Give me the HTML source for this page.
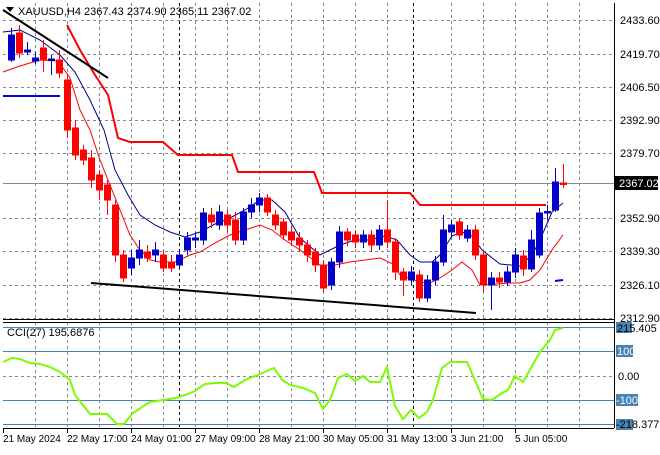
<!DOCTYPE html><html><head><style>
body{margin:0;background:#fff;width:660px;height:450px;overflow:hidden;font-family:"Liberation Sans",sans-serif}
svg text{font-family:"Liberation Sans",sans-serif;font-size:11px;fill:#000}
svg g.b text{font-size:10px}
</style></head><body>
<svg width="660" height="450" xmlns="http://www.w3.org/2000/svg">
<rect width="660" height="450" fill="#fff"/>
<g stroke="#7f8a96" stroke-dasharray="3,3" stroke-width="1" fill="none">
<path d="M3,20.5H614M3,54.5H614M3,87.5H614M3,120.5H614M3,153.5H614M3,218.5H614M3,251.5H614M3,285.5H614M3,318.5H614"/>
<path d="M3,376.5H614"/>
<path d="M35.5,3V318M67.5,3V318M99.5,3V318M131.5,3V318M163.5,3V318M195.5,3V318M227.5,3V318M259.5,3V318M291.5,3V318M323.5,3V318M355.5,3V318M387.5,3V318M451.5,3V318M483.5,3V318M515.5,3V318M547.5,3V318M579.5,3V318"/>
<path d="M35.5,322V428M67.5,322V428M99.5,322V428M131.5,322V428M163.5,322V428M195.5,322V428M227.5,322V428M259.5,322V428M291.5,322V428M323.5,322V428M355.5,322V428M387.5,322V428M451.5,322V428M483.5,322V428M515.5,322V428M547.5,322V428M579.5,322V428"/>
</g>
<g stroke="#000" stroke-dasharray="3,3"><path d="M179.5,3V318M413.5,3V318M179.5,322V428M413.5,322V428"/></g>
<g stroke="#4682b4"><path d="M3,327.5H614M3,351.5H614M3,400.5H614M3,424.5H614"/></g>
<path d="M3,183.5H614" stroke="#7f8a96"/>
<g stroke="#000" fill="none"><path d="M614.5,3V428M3,319.5H614M3,322.5H614M3,428.5H614"/></g>
<g stroke="#000"><path d="M3.5,428V433M67.5,428V433M131.5,428V433M195.5,428V433M259.5,428V433M323.5,428V433M387.5,428V433M451.5,428V433M515.5,428V433"/></g>
<polyline fill="none" stroke="#f00" stroke-width="2" points="67,25 80,50 95,75 108,95 118,138 130,142 163,142 178,155 232,155 238,172 314,172 322,193 410,193 420,205 546,205"/>
<polyline fill="none" stroke="#00008b" stroke-width="1" points="3,32 20,30 40,40 60,55 75,72 90,100 104,130 115,170 128,195 140,215 155,225 170,232 185,237 200,232 215,224 230,218 245,210 260,200 272,200 285,212 300,238 320,255 340,245 355,240 370,240 385,236 397,240 410,255 420,262 432,262 440,255 452,236 462,232 472,236 482,250 500,264 520,266 532,255 540,240 552,212 563,203"/>
<polyline fill="none" stroke="#f00" stroke-width="1" points="3,72 20,66 40,60 58,61 70,78 80,110 90,130 100,160 110,185 120,210 130,235 140,250 150,260 160,262 175,262 190,255 200,252 215,243 230,235 245,230 260,225 272,230 285,240 300,250 320,265 335,265 350,262 365,260 380,258 393,264 400,275 420,282 430,283 440,278 452,270 462,262 472,270 480,285 495,284 510,283 520,283 530,280 540,270 552,250 563,235"/>
<path d="M3,10L108,78M91,283L476,313" stroke="#000" stroke-width="2"/>
<path d="M3,96H60M555,281L563,280" stroke="#00f" stroke-width="2"/>
<g stroke="#0000c8" fill="#0000c8">
<path d="M11.5,28V62M27.5,42V55M35.5,52V64M51.5,55V75M131.5,250V275M139.5,240V265M155.5,242V262M179.5,250V270M187.5,232V255M195.5,232V248M203.5,208V245M219.5,205V230M243.5,208V245M251.5,198V218M259.5,193V212M331.5,258V290M339.5,226V268M363.5,230V248M379.5,225V250M411.5,266V285M427.5,275V302M435.5,256V285M443.5,215V266M451.5,220V238M467.5,225V242M491.5,272V310M507.5,266V286M515.5,248V278M531.5,230V272M539.5,208V258M547.5,205V220M555.5,168V212"/>
<rect x="8.5" y="35" width="6" height="25"/><rect x="24.5" y="50" width="6" height="2"/><rect x="32.5" y="58" width="6" height="3"/><rect x="48.5" y="59" width="6" height="1.5"/>
<rect x="128.5" y="258" width="6" height="10"/><rect x="136.5" y="250" width="6" height="8"/><rect x="152.5" y="250" width="6" height="5"/><rect x="176.5" y="255" width="6" height="10"/><rect x="184.5" y="238" width="6" height="12"/><rect x="192.5" y="238" width="6" height="2"/><rect x="200.5" y="213" width="6" height="27"/><rect x="216.5" y="212" width="6" height="13"/><rect x="240.5" y="212" width="6" height="28"/><rect x="248.5" y="205" width="6" height="7"/><rect x="256.5" y="198" width="6" height="7"/>
<rect x="328.5" y="262" width="6" height="23"/><rect x="336.5" y="232" width="6" height="30"/><rect x="360.5" y="235" width="6" height="7"/><rect x="376.5" y="230" width="6" height="15"/><rect x="408.5" y="272" width="6" height="8"/><rect x="424.5" y="280" width="6" height="18"/><rect x="432.5" y="262" width="6" height="18"/><rect x="440.5" y="230" width="6" height="32"/><rect x="448.5" y="225" width="6" height="7"/><rect x="464.5" y="230" width="6" height="8"/><rect x="488.5" y="278" width="6" height="7"/><rect x="504.5" y="272" width="6" height="10"/><rect x="512.5" y="255" width="6" height="17"/><rect x="528.5" y="240" width="6" height="29"/><rect x="536.5" y="213" width="6" height="42"/><rect x="544.5" y="211.5" width="6" height="1.5"/><rect x="552.5" y="182" width="6" height="28"/>
</g>
<g stroke="#f00" fill="#f00">
<path d="M19.5,25V58M43.5,40V72M59.5,50V78M67.5,75V138M75.5,120V160M83.5,145V165M91.5,150V188M99.5,170V200M107.5,180V215M115.5,200V262M123.5,250V282M147.5,245V262M163.5,250V272M171.5,255V272M211.5,208V228M227.5,210V232M235.5,212V245M267.5,194V216M275.5,210V230M283.5,218V240M291.5,226V246M299.5,232V252M307.5,240V262M315.5,248V272M323.5,260V292M347.5,228V246M355.5,230V248M371.5,230V252M387.5,200V248M395.5,238V280M403.5,268V296M419.5,270V302M459.5,218V240M475.5,225V260M483.5,250V292M499.5,272V288M523.5,250V276M563.5,164V188"/>
<rect x="16.5" y="33" width="6" height="20"/><rect x="40.5" y="48" width="6" height="12"/><rect x="56.5" y="60" width="6" height="13"/><rect x="64.5" y="80" width="6" height="50"/><rect x="72.5" y="128" width="6" height="27"/><rect x="80.5" y="150" width="6" height="10"/><rect x="88.5" y="158" width="6" height="22"/><rect x="96.5" y="175" width="6" height="15"/><rect x="104.5" y="185" width="6" height="15"/><rect x="112.5" y="205" width="6" height="50"/><rect x="120.5" y="255" width="6" height="23"/><rect x="144.5" y="252" width="6" height="6"/><rect x="160.5" y="255" width="6" height="13"/><rect x="168.5" y="262" width="6" height="6"/><rect x="208.5" y="215" width="6" height="7"/><rect x="224.5" y="215" width="6" height="10"/><rect x="232.5" y="220" width="6" height="20"/><rect x="264.5" y="198" width="6" height="14"/><rect x="272.5" y="215" width="6" height="10"/><rect x="280.5" y="222" width="6" height="13"/><rect x="288.5" y="232" width="6" height="8"/><rect x="296.5" y="238" width="6" height="7"/><rect x="304.5" y="245" width="6" height="10"/><rect x="312.5" y="252" width="6" height="13"/><rect x="320.5" y="265" width="6" height="23"/><rect x="344.5" y="232" width="6" height="8"/><rect x="352.5" y="235" width="6" height="7"/><rect x="368.5" y="235" width="6" height="10"/><rect x="384.5" y="230" width="6" height="12"/><rect x="392.5" y="242" width="6" height="30"/><rect x="400.5" y="272" width="6" height="8"/><rect x="416.5" y="275" width="6" height="23"/><rect x="456.5" y="222" width="6" height="13"/><rect x="472.5" y="230" width="6" height="25"/><rect x="480.5" y="255" width="6" height="30"/><rect x="496.5" y="278" width="6" height="4"/><rect x="520.5" y="256" width="6" height="13"/><rect x="560.5" y="183" width="6" height="1.5"/>
</g>
<polyline fill="none" stroke="#7cfc00" stroke-width="2" points="3,362 12,358 20,359 30,363 40,364 50,367 60,372 70,380 75,395 90,414 107,414 117,424 124,424 133,413 150,402 163,400 176,398 185,395 195,391 205,384 215,383 226,383 234,387 245,380 260,374 274,368 282,380 290,385 303,388 315,393 323,409 330,400 338,378 347,374 355,381 363,376 370,382 380,382 387,367 395,406 403,419 411,410 419,418 427,412 433,400 442,368 450,362 467,362 483,399 492,400 502,393 508,390 515,376 523,382 540,352 550,340 555,330 563,328"/>
<path d="M6,7H14L10,12Z" fill="#000"/>
<text x="18" y="15">XAUUSD,H4  2367.43 2374.90 2365.11 2367.02</text>
<text x="7" y="336">CCI(27) 195.6876</text>
<g>
<text x="620" y="24">2433.60</text><text x="620" y="58">2419.70</text><text x="620" y="91">2406.50</text><text x="620" y="124">2392.90</text><text x="620" y="157">2379.70</text>
<rect x="615" y="176" width="43" height="14" fill="#000"/><text x="619" y="187" style="fill:#fff">2367.02</text>
<text x="620" y="222">2352.90</text><text x="620" y="255">2339.30</text><text x="620" y="289">2326.10</text><text x="620" y="322">2312.90</text>
<rect x="616" y="322" width="16" height="11" fill="#4682b4"/><text x="617" y="332">215.405</text>
<rect x="616" y="345" width="17" height="12" fill="#4682b4"/><text x="617" y="355" style="fill:#fff">100</text>
<text x="618" y="380">0.00</text>
<rect x="616" y="394" width="22" height="12" fill="#4682b4"/><text x="616" y="404" style="fill:#fff">-100</text>
<rect x="616" y="419" width="17" height="11" fill="#4682b4"/><text x="616" y="428">-218.3771</text>
</g>
<g class="b">
<text x="3" y="442">21 May 2024</text><text x="67" y="442">22 May 17:00</text><text x="131" y="442">24 May 01:00</text><text x="195" y="442">27 May 09:00</text><text x="259" y="442">28 May 21:00</text><text x="323" y="442">30 May 05:00</text><text x="387" y="442">31 May 13:00</text><text x="451" y="442">3 Jun 21:00</text><text x="515" y="442">5 Jun 05:00</text>
</g>
</svg>
</body></html>
